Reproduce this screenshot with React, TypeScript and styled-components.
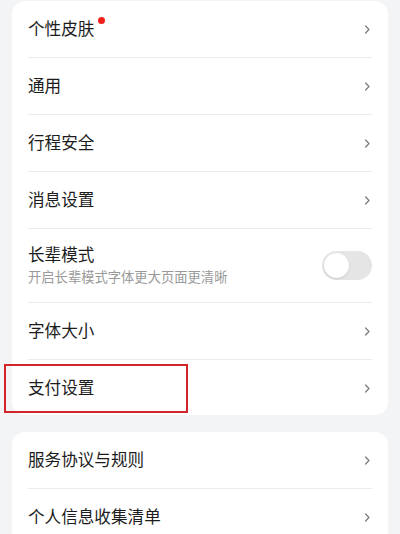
import React from 'react'
import styled, { createGlobalStyle } from 'styled-components'

const GlobalStyle = createGlobalStyle`
  html, body {
    margin: 0;
    padding: 0;
    background: #f3f4f6;
    font-family: "Noto Sans CJK SC", "Noto Sans", sans-serif;
  }
`

const Page = styled.div`
  padding: 1px 12px 0;
  display: flex;
  flex-direction: column;
  gap: 17px;
  height: 534px;
  box-sizing: border-box;
  overflow: hidden;
`

const Card = styled.div`
  background: #ffffff;
  border-radius: 13px;
  padding: 0 16px;
`

const Row = styled.div<{ $height?: number; $last?: boolean }>`
  position: relative;
  display: flex;
  align-items: center;
  justify-content: space-between;
  box-sizing: content-box;
  height: ${(p) => p.$height ?? 56}px;
  padding-bottom: 0;
  border-bottom: ${(p) => (p.$last ? 'none' : '1px solid #ebebeb')};
`

const TextBlock = styled.div`
  display: flex;
  flex-direction: column;
  gap: 1px;
  margin-top: -1px;
`

const Title = styled.span`
  position: relative;
  font-size: 16.6px;
  line-height: 24px;
  color: #1c1c1c;
  margin-top: -2px;
`

const Subtitle = styled.span`
  font-size: 13.3px;
  line-height: 20px;
  color: #9a9a9a;
`

const Dot = styled.span`
  position: absolute;
  top: 1px;
  right: -11px;
  width: 7px;
  height: 7px;
  border-radius: 50%;
  background: #f0211b;
`

const Toggle = styled.div`
  width: 50px;
  height: 29px;
  border-radius: 15px;
  background: #e5e5e5;
  display: flex;
  align-items: center;
  padding: 0 2px;
  box-sizing: border-box;
`

const Knob = styled.div`
  width: 25px;
  height: 25px;
  border-radius: 50%;
  background: #ffffff;
  box-shadow: 0 1px 2px rgba(0, 0, 0, 0.12);
`

const Highlight = styled.div`
  position: absolute;
  left: -24px;
  top: 4px;
  width: 184px;
  height: 49px;
  border: 2.5px solid #d3242c;
  box-sizing: border-box;
  pointer-events: none;
`

function Chevron() {
  return (
    <svg width="12" height="12" viewBox="0 0 12 12" fill="none">
      <path
        d="M5.6 3 L9 6.5 L5.6 10"
        stroke="#7a7a7a"
        strokeWidth="1.2"
        strokeLinecap="round"
        strokeLinejoin="round"
      />
    </svg>
  )
}

export default function App() {
  return (
    <>
      <GlobalStyle />
      <Page>
        <Card>
          <Row>
            <Title>
              个性皮肤
              <Dot />
            </Title>
            <Chevron />
          </Row>
          <Row>
            <Title>通用</Title>
            <Chevron />
          </Row>
          <Row>
            <Title>行程安全</Title>
            <Chevron />
          </Row>
          <Row>
            <Title>消息设置</Title>
            <Chevron />
          </Row>
          <Row $height={73}>
            <TextBlock>
              <Title>长辈模式</Title>
              <Subtitle>开启长辈模式字体更大页面更清晰</Subtitle>
            </TextBlock>
            <Toggle>
              <Knob />
            </Toggle>
          </Row>
          <Row>
            <Title>字体大小</Title>
            <Chevron />
          </Row>
          <Row $height={55} $last>
            <Title>支付设置</Title>
            <Chevron />
            <Highlight />
          </Row>
        </Card>
        <Card>
          <Row>
            <Title>服务协议与规则</Title>
            <Chevron />
          </Row>
          <Row>
            <Title>个人信息收集清单</Title>
            <Chevron />
          </Row>
        </Card>
      </Page>
    </>
  )
}
